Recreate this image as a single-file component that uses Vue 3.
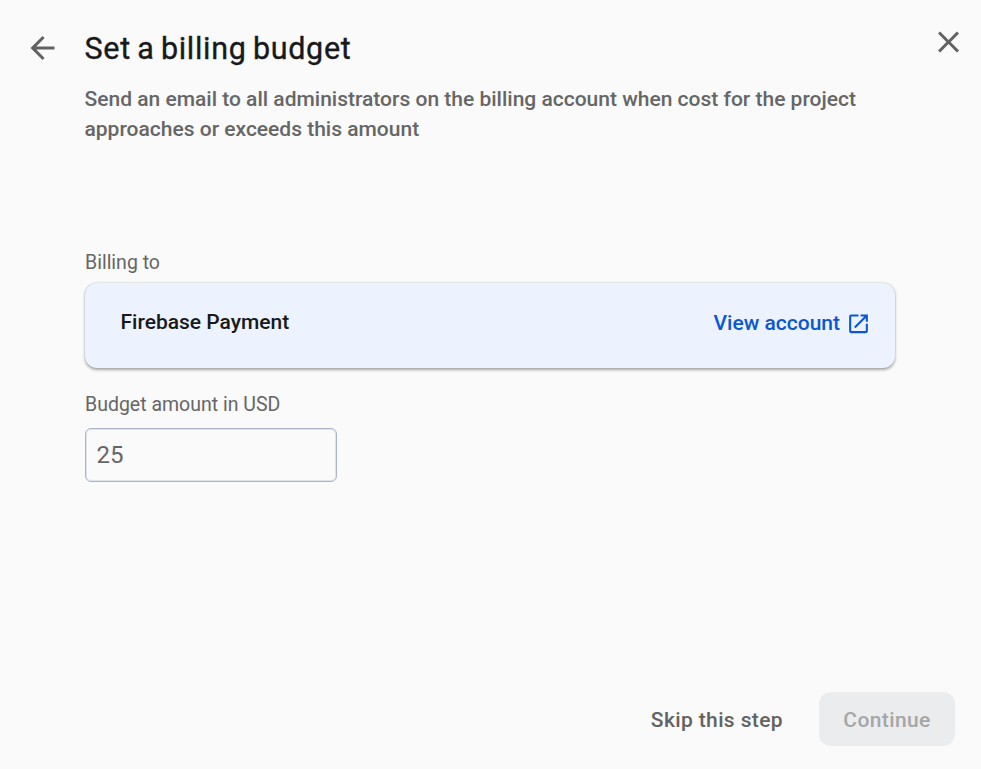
<script setup>
import { ref } from 'vue'
const amount = ref('25')
</script>

<template>
  <main class="dialog">
    <header class="header">
      <button class="icon-btn back" aria-label="Back">
        <svg width="36" height="36" viewBox="-.35 0 24 24"><path d="M20 11H7.83l5.59-5.59L12 4l-8 8 8 8 1.41-1.41L7.83 13H20v-2z" /></svg>
      </button>
      <div class="heading">
        <h1>Set a billing budget</h1>
        <p>Send an email to all administrators on the billing account when cost for the project<br />approaches or exceeds this amount</p>
      </div>
      <button class="icon-btn close" aria-label="Close">
        <svg width="36" height="36" viewBox="-.35 0 24 24"><path d="M19 6.41L17.59 5 12 10.59 6.41 5 5 6.41 10.59 12 5 17.59 6.41 19 12 13.41 17.59 19 19 17.59 13.41 12z" /></svg>
      </button>
    </header>
    <section class="content">
      <span class="label">Billing to</span>
      <div class="card">
        <span class="account">Firebase Payment</span>
        <a class="link"><span>View account</span>
          <svg width="25" height="25" viewBox="0 -.3 24 24"><path d="M19 19H5V5h7V3H5c-1.11 0-2 .9-2 2v14c0 1.1.89 2 2 2h14c1.1 0 2-.9 2-2v-7h-2v7zM14 3v2h3.59l-9.83 9.83 1.41 1.41L19 6.41V10h2V3h-7z" /></svg>
        </a>
      </div>
      <label class="label budget" for="amount">Budget amount in USD</label>
      <input id="amount" v-model="amount" class="input" type="text" />
    </section>
    <footer class="footer">
      <button class="btn">Skip this step</button>
      <button class="btn primary" disabled>Continue</button>
    </footer>
  </main>
</template>

<style>
body { margin: 0; background: #fafafa; }
</style>

<style scoped>
.dialog { box-sizing: border-box; width: 981px; height: 769px; display: flex; flex-direction: column; background: #fafafa; color: #666; font-family: Roboto, sans-serif; }
button { border: 0; background: none; padding: 0; font-family: inherit; }
svg { display: block; fill: currentColor; }
.header { display: flex; align-items: flex-start; height: 248px; }
.icon-btn { color: #626262; flex: none; }
.back { margin: 30px 24.5px 0 24px; }
.close { margin: 24px 15px 0 auto; }
.heading { padding-top: 29px; white-space: nowrap; }
h1 { margin: 0; color: #18191b; font: 400 30.5px/40px Roboto, sans-serif; letter-spacing: .68px; word-spacing: -1.8px; -webkit-text-stroke: .35px currentColor; }
p { margin: 15px 0 0; font-size: 21px; font-weight: 500; line-height: 30px; }
.content { padding: 0 85px; display: flex; flex-direction: column; align-items: flex-start; }
.label { font-size: 19.5px; line-height: 30px; }
.card { box-sizing: border-box; width: 810px; height: 85px; margin-top: 5px; padding: 0 24px 0 35.5px; display: flex; align-items: center; justify-content: space-between; border-radius: 12px; background: #ecf2fe; box-shadow: 0 1.5px 3px rgba(0,0,0,.32), 0 0 1.5px rgba(0,0,0,.16); }
.account { padding-bottom: 8px; color: #18191b; font-size: 21px; font-weight: 500; }
.link { padding-bottom: 4px; display: flex; align-items: center; gap: 6px; color: #0b57d0; font-size: 21px; font-weight: 500; }
.link span { padding-bottom: 1px; }
.budget { margin-top: 22px; }
.input { box-sizing: border-box; width: 252px; height: 54px; margin-top: 8px; padding: 0 10.5px; border: 1px solid #abb5c7; border-radius: 6px; background: #fafafa; box-shadow: inset 0 0 0 1px #dfe3ea; color: #666; font: 400 24px Roboto, sans-serif; }
.footer { margin: auto 26px 23px; display: flex; justify-content: flex-end; gap: 36px; }
.btn { height: 54px; padding-top: 1px; color: #626262; font-size: 21px; font-weight: 500; letter-spacing: .375px; }
.primary { width: 136px; border-radius: 12px; background: #ebecee; color: #a5a6a8; }
</style>
